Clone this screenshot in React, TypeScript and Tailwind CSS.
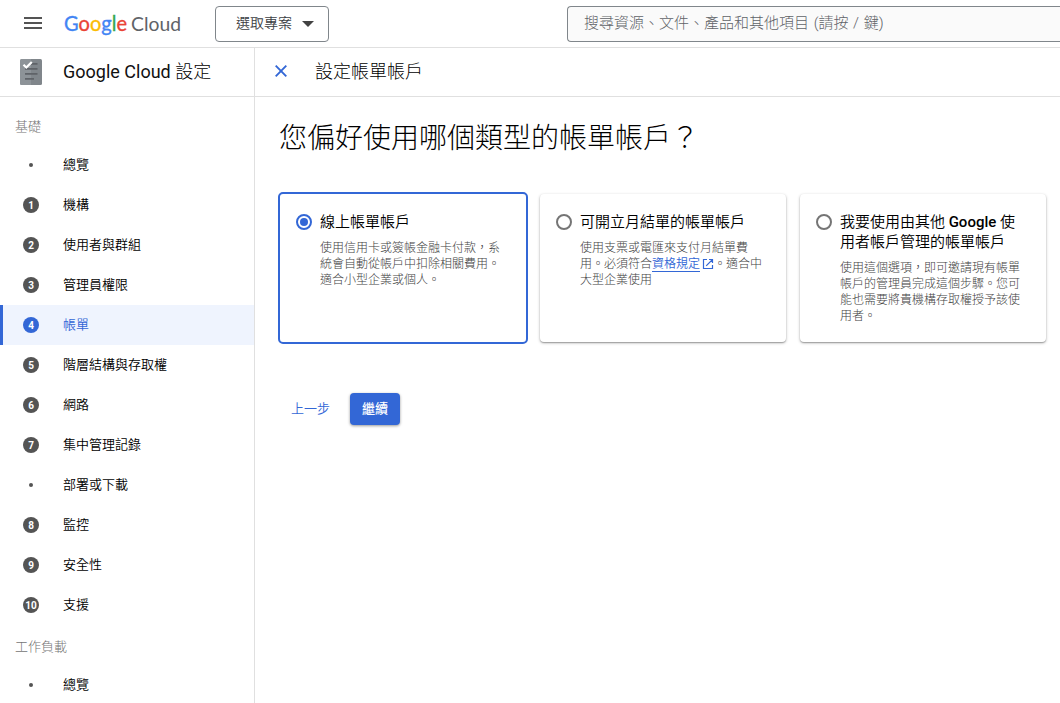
import React from "react";

type NavEntry = { label: string; step?: number; active?: boolean };

const BASICS: NavEntry[] = [
  { label: "總覽" },
  { label: "機構", step: 1 },
  { label: "使用者與群組", step: 2 },
  { label: "管理員權限", step: 3 },
  { label: "帳單", step: 4, active: true },
  { label: "階層結構與存取權", step: 5 },
  { label: "網路", step: 6 },
  { label: "集中管理記錄", step: 7 },
  { label: "部署或下載" },
  { label: "監控", step: 8 },
  { label: "安全性", step: 9 },
  { label: "支援", step: 10 },
];

const WORKLOADS: NavEntry[] = [{ label: "總覽" }];

function GoogleCloudLogo() {
  return (
    <svg width="120" height="44" viewBox="0 0 120 44" className="overflow-visible font-['Lato',sans-serif] font-normal" aria-label="Google Cloud">
      <text x="0" y="29" fontSize="21" textLength="63" lengthAdjust="spacingAndGlyphs" strokeWidth="0.35">
        <tspan fill="#4285f4" stroke="#4285f4">G</tspan>
        <tspan fill="#ea4335" stroke="#ea4335">o</tspan>
        <tspan fill="#fbbc04" stroke="#fbbc04">o</tspan>
        <tspan fill="#4285f4" stroke="#4285f4">g</tspan>
        <tspan fill="#34a853" stroke="#34a853">l</tspan>
        <tspan fill="#ea4335" stroke="#ea4335">e</tspan>
      </text>
      <text x="67" y="29" fontSize="20" fill="#5f6368" textLength="50" lengthAdjust="spacingAndGlyphs">
        Cloud
      </text>
    </svg>
  );
}

function SetupIcon() {
  return (
    <svg width="22" height="26" viewBox="0 0 22 26">
      <rect width="22" height="26" rx="1.5" fill="#80868b" />
      <path d="M0 1.500A1.500 1.500 0 0 1 1.500 0H11V26H1.500A1.500 1.500 0 0 1 0 24.500Z" fill="#9aa0a6" opacity=".5" />
      <path d="M12 4h5.500v1.700h-7zM5 9h12.500v1.700H5zM5 14h12.500v1.700H5zM5 19h9v1.700H5z" fill="#5f6368" />
      <path d="M3.500 5.800L6.300 8.500L11.800 3" fill="none" stroke="#fff" strokeWidth="2.200" />
    </svg>
  );
}

function NavRow({ label, step, active }: NavEntry) {
  return (
    <li
      className={
        active
          ? "flex h-10 items-center border-l-3 border-[#3367d6] bg-[#eff4fe] pl-5 text-[#3367d6]"
          : "flex h-10 items-center pl-[23px] text-black"
      }
    >
      <span className="flex w-4 shrink-0 items-center justify-center">
        {step ? (
          <span
            className={
              active
                ? "flex size-4 items-center justify-center rounded-full bg-[#3367d6] pt-px text-[10px] leading-none font-bold text-white"
                : "flex size-4 items-center justify-center rounded-full bg-[#545454] pt-px text-[10px] leading-none font-bold text-white"
            }
          >
            {step}
          </span>
        ) : (
          <span className="size-1 rounded-full bg-[#545454]" />
        )}
      </span>
      <span className="ml-6 text-[13px] font-[350]">{label}</span>
    </li>
  );
}

function Radio({ checked }: { checked?: boolean }) {
  return (
    <span
      className={
        checked
          ? "flex size-4 shrink-0 items-center justify-center rounded-full border-2 border-[#3367d6]"
          : "flex size-4 shrink-0 items-center justify-center rounded-full border-2 border-[#757575]"
      }
    >
      {checked && <span className="size-2 rounded-full bg-[#3367d6]" />}
    </span>
  );
}

function OptionCard({ title, checked, children }: { title: React.ReactNode; checked?: boolean; children: React.ReactNode }) {
  return (
    <div
      className={
        checked
          ? "flex h-[152px] w-[250px] gap-2 rounded-[5px] border-2 border-[#3367d6] bg-white pt-[18px] pl-4"
          : "mt-[2px] mr-[2px] ml-0.5 flex h-[148px] w-[246px] gap-2 rounded-[4px] bg-white pt-[18px] pl-4 shadow-[0_1px_3px_rgba(0,0,0,0.3),0_1px_1px_rgba(0,0,0,0.2)]"
      }
    >
      <div className="pt-0.5">
        <Radio checked={checked} />
      </div>
      <div className="whitespace-nowrap">
        <h2 className="text-[15px] leading-5 font-[350] text-black">{title}</h2>
        <p className="mt-2 text-[12px] leading-4 text-[#424242]">{children}</p>
      </div>
    </div>
  );
}

export default function App() {
  return (
    <div className="flex h-[703px] w-[1060px] flex-col overflow-hidden bg-white font-['Roboto','Noto_Sans_CJK_TC',sans-serif] font-light text-black">
      <header className="flex h-12 shrink-0 items-center border-b border-[#e0e0e0]">
        <svg width="18" height="12" viewBox="0 0 18 12" className="mb-px ml-6 shrink-0">
          <path d="M0 0h18v2H0zM0 5h18v2H0zM0 10h18v2H0z" fill="#545454" />
        </svg>
        <div className="ml-[22px] flex w-[118px] shrink-0">
          <GoogleCloudLogo />
        </div>
        <button className="ml-[33px] flex h-9 w-[114px] items-center rounded-[4px] border border-[#80868b] pl-5 text-[14px] font-[350] text-[#3c4043]">
          <span>選取專案</span>
          <svg width="12" height="6" viewBox="0 0 12 6" className="ml-2.5">
            <path d="M0 0h12L6 6z" fill="#424242" />
          </svg>
        </button>
        <div className="ml-[238px] flex h-9 flex-1 items-center rounded-l-[4px] border border-r-0 border-[#80868b] bg-[#fafafa] pl-4 text-[15px] whitespace-nowrap text-[#5f6368] [word-spacing:1px]">
          搜尋資源、文件、產品和其他項目 (請按 / 鍵)
        </div>
      </header>
      <div className="flex min-h-0 flex-1">
        <aside className="flex w-[255px] shrink-0 flex-col border-r border-[#e0e0e0]">
          <div className="flex h-[49px] shrink-0 items-center border-b border-[#e0e0e0] pl-5">
            <SetupIcon />
            <span className="ml-[21px] pb-0.5 text-[18px] font-normal text-[#111]">
              Google Cloud <span className="font-light text-black">設定</span>
            </span>
          </div>
          <nav className="pt-[18px]">
            <h3 className="flex h-[30px] items-start pl-[15px] pt-0.5 text-[13px] leading-5 text-[#757575]">基礎</h3>
            <ul>
              {BASICS.map((e, i) => (
                <NavRow key={i} {...e} />
              ))}
            </ul>
            <h3 className="flex h-10 items-center pl-[15px] pt-1 text-[13px] leading-5 text-[#757575]">工作負載</h3>
            <ul>
              {WORKLOADS.map((e, i) => (
                <NavRow key={i} {...e} />
              ))}
            </ul>
          </nav>
        </aside>
        <main className="flex-1">
          <div className="flex h-[49px] items-center border-b border-[#e0e0e0] pb-0.5 pl-5">
            <svg width="12" height="12" viewBox="0 0 12 12">
              <path d="M0.700 0.700L11.300 11.300M11.300 0.700L0.700 11.300" stroke="#3367d6" strokeWidth="1.900" />
            </svg>
            <span className="ml-7 text-[18px]">設定帳單帳戶</span>
          </div>
          <h1 className="pt-[22px] pl-6 text-[28px] leading-10 font-light">您偏好使用哪個類型的帳單帳戶？</h1>
          <div className="mt-[33px] flex gap-2.5 pl-[23px]">
            <OptionCard title="線上帳單帳戶" checked>
              使用信用卡或簽帳金融卡付款，系
              <br />
              統會自動從帳戶中扣除相關費用。
              <br />
              適合小型企業或個人。
            </OptionCard>
            <OptionCard title="可開立月結單的帳單帳戶">
              使用支票或電匯來支付月結單費
              <br />
              用。必須符合
              <a className="border-b border-[#3367d6] font-[350] text-[#3367d6]">資格規定</a>
              <svg width="12" height="12" viewBox="0 0 12 12" className="ml-0.5 inline-block align-[-2px]">
                <path d="M5 1.500H1.500V10.500H10.500V7M7 1.500H10.500V5M10.500 1.500L4.200 7.800" fill="none" stroke="#3367d6" strokeWidth="1.200" />
              </svg>
              。適合中
              <br />
              大型企業使用
            </OptionCard>
            <OptionCard
              title={
                <>
                  我要使用由其他 <span className="font-medium">Google</span> 使
                  <br />
                  用者帳戶管理的帳單帳戶
                </>
              }
            >
              使用這個選項，即可邀請現有帳單
              <br />
              帳戶的管理員完成這個步驟。您可
              <br />
              能也需要將貴機構存取權授予該使
              <br />
              用者。
            </OptionCard>
          </div>
          <div className="mt-[49px] flex h-8 items-center pl-9">
            <button className="text-[13px] font-[350] text-[#3367d6]">上一步</button>
            <button className="ml-5 h-8 w-[50px] rounded-[4px] bg-[#3367d6] text-[13px] font-medium text-white shadow-[0_1px_3px_rgba(0,0,0,0.4)]">
              繼續
            </button>
          </div>
        </main>
      </div>
    </div>
  );
}
